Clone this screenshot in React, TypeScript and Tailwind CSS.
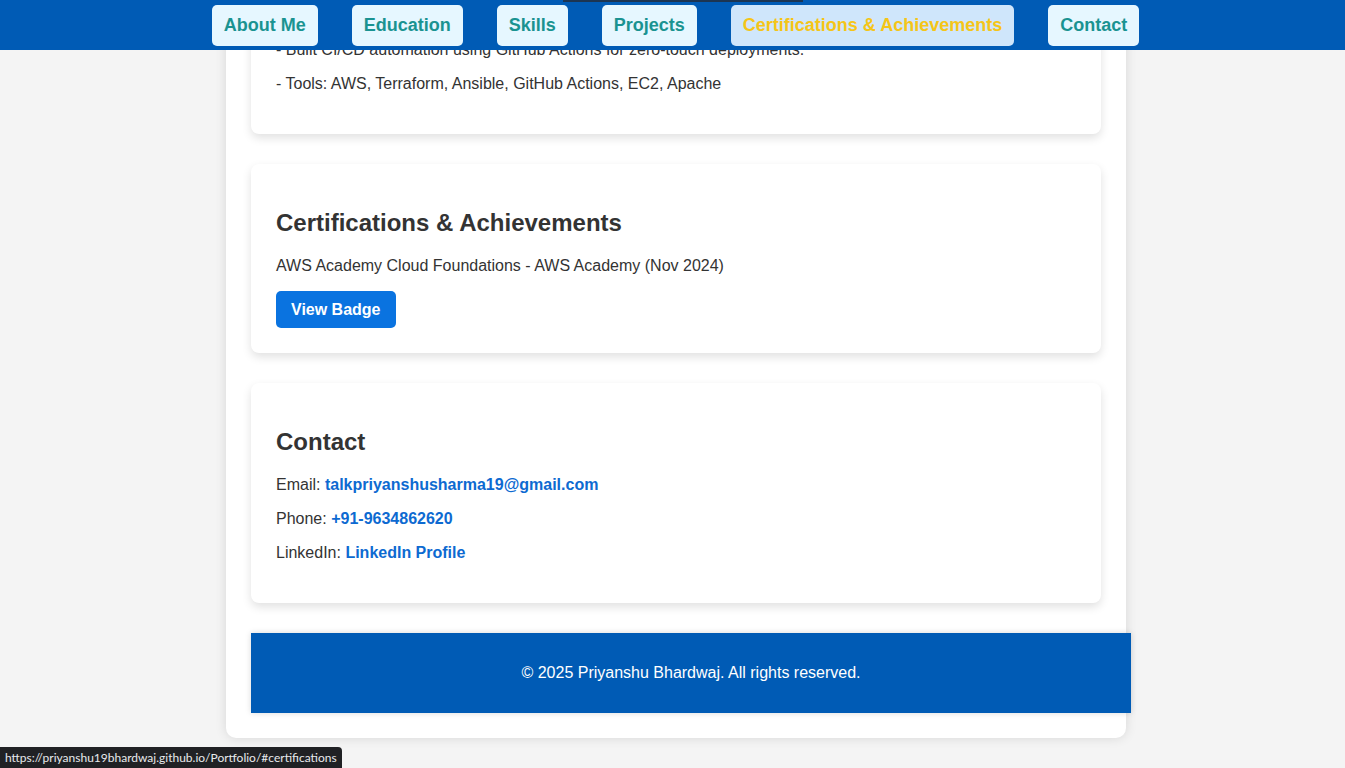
const NAV_ITEMS = [
  "About Me",
  "Education",
  "Skills",
  "Projects",
  "Certifications & Achievements",
  "Contact",
];

const ACTIVE = "Certifications & Achievements";

const Card = ({ children }: { children: React.ReactNode }) => (
  <section className="bg-white rounded-[8px] shadow-[0_4px_10px_rgba(0,0,0,0.12)] px-[25px] py-[25px] mb-[30px]">
    {children}
  </section>
);

const Heading = ({ children }: { children: React.ReactNode }) => (
  <h2 className="text-[24px] font-bold text-[#333] my-[20px] leading-[28px]">
    {children}
  </h2>
);

const Line = ({ children }: { children: React.ReactNode }) => (
  <p className="my-[16px] leading-[18px]">{children}</p>
);

const App = () => {
  return (
    <div
      className="h-[768px] overflow-hidden bg-[#f4f4f4] text-[16px] text-[#333]"
      style={{ fontFamily: '"Liberation Sans", Arial, sans-serif' }}
    >
      <nav className="fixed top-0 left-0 right-0 h-[50px] bg-[#005bb5] z-10 flex items-center justify-center gap-[34px] pl-[6px]">
        <div className="absolute top-0 left-[563px] w-[240px] h-[2px] bg-[#1c3552]" />
        {NAV_ITEMS.map((item) => (
          <a
            key={item}
            href="#"
            className={`relative rounded-[5px] px-3 h-[41px] flex items-center text-[18px] font-bold ${
              item === ACTIVE
                ? "bg-[#cfe6fb] text-[#f5c518]"
                : "bg-[#e6f7ff] text-[#1a9391]"
            }`}
          >
            {item}
          </a>
        ))}
      </nav>

      {/* page is scrolled to the bottom; the projects card is cut off by the top edge */}
      <main className="w-[900px] ml-[226px] -mt-[25px] mb-[30px] bg-white rounded-[10px] shadow-[0_0_12px_rgba(0,0,0,0.12)] p-[25px]">
        <Card>
          <Line>- Built CI/CD automation using GitHub Actions for zero-touch deployments.</Line>
          <Line>- Tools: AWS, Terraform, Ansible, GitHub Actions, EC2, Apache</Line>
        </Card>

        <Card>
          <Heading>Certifications &amp; Achievements</Heading>
          <Line>AWS Academy Cloud Foundations - AWS Academy (Nov 2024)</Line>
          <a
            href="#"
            className="inline-block bg-[#0a73e0] text-white font-bold rounded-[5px] px-[15px] py-[10px] leading-[17px]"
          >
            View Badge
          </a>
        </Card>

        <Card>
          <Heading>Contact</Heading>
          <Line>
            Email:{" "}
            <a href="#" className="font-bold text-[#0d6ad1]">
              talkpriyanshusharma19@gmail.com
            </a>
          </Line>
          <Line>
            Phone:{" "}
            <a href="#" className="font-bold text-[#0d6ad1]">
              +91-9634862620
            </a>
          </Line>
          <Line>
            LinkedIn:{" "}
            <a href="#" className="font-bold text-[#0d6ad1]">
              LinkedIn Profile
            </a>
          </Line>
        </Card>

        <footer className="w-[880px] h-[80px] bg-[#005bb5] text-white flex items-center justify-center shadow-[0_0_6px_rgba(0,0,0,0.15)]">
          <p>© 2025 Priyanshu Bhardwaj. All rights reserved.</p>
        </footer>
      </main>

      <div
        className="fixed bottom-0 left-0 h-[21px] px-[5px] flex items-center bg-[#202124] text-[#e8eaed] text-[12px] rounded-tr-[4px]"
        style={{ fontFamily: 'Lato, "Open Sans", sans-serif' }}
      >
        https://priyanshu19bhardwaj.github.io/Portfolio/#certifications
      </div>
    </div>
  );
};

export default App;
